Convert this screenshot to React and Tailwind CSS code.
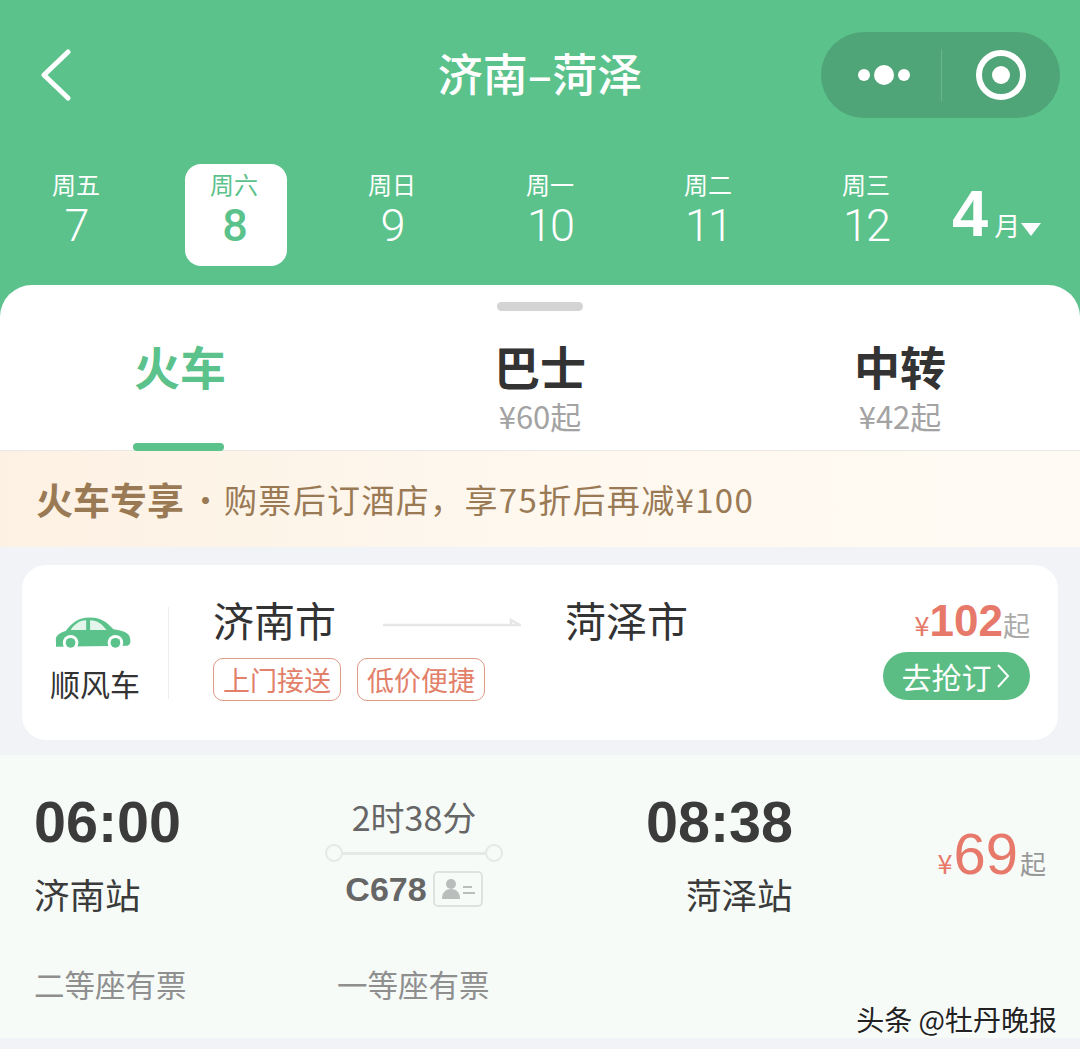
const cjk = '"Noto Sans CJK SC", "Liberation Sans", sans-serif';

const days = [
  { week: '周五', day: '7' },
  { week: '周六', day: '8', active: true },
  { week: '周日', day: '9' },
  { week: '周一', day: '10' },
  { week: '周二', day: '11' },
  { week: '周三', day: '12' },
];

function Header() {
  return (
    <div className="flex h-[317px] flex-col bg-[#5bc28b] text-white">
      <div className="relative mt-[32px] flex h-[86px] items-center justify-between pl-[38px] pr-[20px]">
        <svg width="36" height="52" viewBox="0 0 36 52" fill="none" stroke="white" strokeWidth="5" strokeLinecap="round" strokeLinejoin="round">
          <path d="M30 3 L6 26 L30 49" />
        </svg>
        <div className="absolute left-0 right-0 top-[13px] text-center text-[45px] leading-[56px] font-medium">济南–菏泽</div>
        <div className="flex h-[86px] w-[239px] items-center rounded-full bg-[#4fa578]">
          <div className="flex w-[120px] items-center justify-center gap-[4px] pl-[6px]">
            <span className="h-[12px] w-[12px] rounded-full bg-white" />
            <span className="h-[20px] w-[20px] rounded-full bg-white" />
            <span className="h-[12px] w-[12px] rounded-full bg-white" />
          </div>
          <div className="h-[52px] w-px bg-[#66b68c]" />
          <div className="flex flex-1 items-center justify-center">
            <div className="flex h-[50px] w-[50px] items-center justify-center rounded-full border-[6px] border-white">
              <span className="h-[18px] w-[18px] rounded-full bg-white" />
            </div>
          </div>
        </div>
      </div>
      <div className="mt-[46px] flex pl-[25px]">
        {days.map((d) => (
          <div key={d.day} className="flex w-[158px] justify-start">
            <div className={`flex h-[102px] flex-col items-center rounded-[16px] pt-[6px] ${d.active ? 'ml-[2px] w-[102px] bg-white pr-[4px] text-[#5bc28b]' : 'w-[102px]'}`}>
              <span className="text-[24px] leading-[28px]">{d.week}</span>
              <span className={`mt-[4px] font-['Roboto'] text-[45px] leading-[48px] tracking-[-2px] ${d.active ? 'font-medium' : 'font-light'}`}>{d.day}</span>
            </div>
          </div>
        ))}
        <div className="-ml-[21px] mt-[15px] flex h-[70px] items-baseline">
          <span className="text-[65px] leading-[70px] font-bold font-['Liberation_Sans']">4</span>
          <span className="ml-[6px] text-[26px] leading-none">月</span>
          <svg className="ml-[1px]" width="20" height="13" viewBox="0 0 20 13" fill="white">
            <path d="M0 0 H20 L10 13 Z" />
          </svg>
        </div>
      </div>
    </div>
  );
}

function Tabs() {
  return (
    <div className="relative -mt-[32px] h-[166px] rounded-t-[32px] bg-white">
      <div className="absolute left-[497px] top-[17px] h-[9px] w-[86px] rounded-full bg-[#d4d4d4]" />
      <div className="flex h-[166px] border-b border-[#e8e8e8]">
        <div className="relative flex w-[360px] flex-col items-center pt-[50px]">
          <span className="text-[46px] leading-[60px] font-bold text-[#5bc28b]">火车</span>
          <span className="absolute bottom-[-1px] left-[133px] h-[8px] w-[91px] rounded-full bg-[#5bc28b]" />
        </div>
        <div className="flex w-[360px] flex-col items-center pt-[50px]">
          <span className="text-[46px] leading-[60px] font-bold text-[#333]">巴士</span>
          <span className="mt-[3px] text-[31px] leading-[36px] text-[#a3a3a3]">¥60起</span>
        </div>
        <div className="flex w-[360px] flex-col items-center pt-[50px]">
          <span className="text-[46px] leading-[60px] font-bold text-[#333]">中转</span>
          <span className="mt-[3px] text-[31px] leading-[36px] text-[#a3a3a3]">¥42起</span>
        </div>
      </div>
    </div>
  );
}

function Promo() {
  return (
    <div className="flex h-[96px] items-center bg-gradient-to-r from-[#fdf1e3] via-[#fef8ef] to-[#fffaf3] pl-[36px]">
      <span className="text-[37px] leading-[48px] font-bold text-[#9a7a55]">火车专享</span>
      <span className="ml-[5px] w-[35px] text-[33px] leading-[48px] text-[#9a7a55]">·</span>
      <span className="text-[33px] leading-[48px] tracking-[1.35px] text-[#9a7a55]">购票后订酒店，享75折后再减¥100</span>
    </div>
  );
}

function Tag({ children }) {
  return (
    <span className="flex h-[43px] w-[128px] items-center justify-center rounded-[10px] border border-[#dd9a88] text-[27px] leading-none text-[#e2806a]">
      {children}
    </span>
  );
}

function CarIcon() {
  return (
    <svg width="76" height="36" viewBox="0 0 78 36" fill="#5bc28b">
      <path d="M1 26 C0 20 4 17 11 15 C17 7 23 1 36 1 C47 1 52 5 60 13 C68 14 76 16 77 22 C78 27 77 29 74 30 L1 31 Z" />
      <path fill="#e4f5ec" d="M16 14 C21 7 26 4 32 4 L32 14 Z M36 4 C44 4 48 8 53 14 L36 14 Z" />
      <circle cx="16" cy="27" r="8" fill="#fff" />
      <circle cx="16" cy="27" r="5" />
      <circle cx="62" cy="27" r="8" fill="#fff" />
      <circle cx="62" cy="27" r="5" />
    </svg>
  );
}

function RideCard() {
  return (
    <div className="bg-[#f1f3f7] px-[22px] pt-[18px] pb-[15px]">
      <div className="flex h-[175px] items-center rounded-[24px] bg-white">
        <div className="flex w-[146px] flex-col items-center pr-[4px] pt-[14px]">
          <CarIcon />
          <span className="ml-[4px] mt-[11px] text-[30px] leading-[40px] text-[#333]">顺风车</span>
        </div>
        <div className="h-[92px] w-px bg-[#eee]" />
        <div className="ml-[44px] flex w-[500px] flex-col pb-[14px]">
          <div className="flex items-center">
            <span className="text-[41px] leading-[56px] text-[#333]">济南市</span>
            <svg className="ml-[47px] mt-[8px]" width="138" height="12" viewBox="0 0 138 12" fill="none">
              <path d="M0 8 H137 L128 3 V8" stroke="#e6e6e6" strokeWidth="2.5" />
            </svg>
            <span className="ml-[44px] text-[41px] leading-[56px] text-[#333]">菏泽市</span>
          </div>
          <div className="mt-[11px] flex gap-[16px]">
            <Tag>上门接送</Tag>
            <Tag>低价便捷</Tag>
          </div>
        </div>
        <div className="ml-auto mr-[28px] flex flex-col items-end pb-[12px]">
          <div className="flex items-baseline text-[#e6796a]">
            <span className="text-[27px]">¥</span>
            <span className="text-[44px] leading-[56px] font-bold font-['Liberation_Sans']">102</span>
            <span className="text-[27px] text-[#aaa]">起</span>
          </div>
          <div className="mt-[3px] flex h-[48px] w-[147px] items-center justify-center gap-[4px] rounded-full bg-[#5bbd84] pr-[2px] text-[30px] leading-none text-white">
            去抢订
            <svg width="14" height="26" viewBox="0 0 14 26" fill="none" stroke="white" strokeWidth="2">
              <path d="M2 2 L12 13 L2 24" />
            </svg>
          </div>
        </div>
      </div>
    </div>
  );
}

function TrainRow() {
  return (
    <div className="relative h-[283px] bg-[#f6fbf8] pt-[34px]">
      <div className="flex">
        <div className="flex w-[280px] flex-col pl-[34px]">
          <span className="text-[57.5px] leading-[66px] font-bold text-[#3b3b3b] font-['Liberation_Sans']">06:00</span>
          <span className="mt-[16px] text-[35.5px] leading-[46px] text-[#3b3b3b]">济南站</span>
        </div>
        <div className="flex w-[268px] flex-col items-center pt-[6px]">
          <span className="text-[34px] leading-[44px] text-[#666]">2时38分</span>
          <div className="mt-[5px] flex w-[178px] items-center">
            <span className="h-[18px] w-[18px] rounded-full border-2 border-[#e4e8e6]" />
            <span className="h-[3px] flex-1 bg-[#e4e8e6]" />
            <span className="h-[18px] w-[18px] rounded-full border-2 border-[#e4e8e6]" />
          </div>
          <div className="mt-[5px] flex items-center gap-[6px]">
            <span className="text-[34px] leading-[44px] font-bold text-[#666] font-['Liberation_Sans']">C678</span>
            <span className="flex h-[36px] w-[50px] items-center justify-center gap-[4px] rounded-[5px] border-2 border-[#dfe2e0]">
              <svg width="34" height="22" viewBox="0 0 34 22" fill="#b9bdbb">
                <circle cx="10" cy="6" r="5" />
                <path d="M1 21 C1 14 5 11 10 11 C15 11 19 14 19 21 Z" />
                <rect x="22" y="8" width="9" height="2" />
                <rect x="22" y="14" width="12" height="2" />
              </svg>
            </span>
          </div>
        </div>
        <div className="flex w-[290px] flex-col items-start pl-[98px]">
          <span className="text-[57.5px] leading-[66px] font-bold text-[#3b3b3b] font-['Liberation_Sans']">08:38</span>
          <span className="mt-[16px] ml-[40px] whitespace-nowrap text-[35.5px] leading-[46px] text-[#3b3b3b]">菏泽站</span>
        </div>
        <div className="ml-auto mr-[34px] mt-[35px] flex items-baseline self-start text-[#e6796a]">
          <span className="mr-[1px] text-[27px]">¥</span>
          <span className="text-[58px] leading-[60px] font-['Liberation_Sans']">69</span>
          <span className="ml-[2px] text-[26px] text-[#999]">起</span>
        </div>
      </div>
      <div className="mt-[45px] flex pl-[34px] text-[30.5px] leading-[44px] text-[#8f8f8f]">
        <span className="w-[303px]">二等座有票</span>
        <span>一等座有票</span>
      </div>
      <div className="absolute right-[23px] top-[246px] text-[28px] leading-[36px] text-[#222] [text-shadow:1px_1px_0_#fff]">头条 @牡丹晚报</div>
    </div>
  );
}

export default function App() {
  return (
    <div className="h-[1059px] w-[1080px] overflow-hidden bg-white" style={{ fontFamily: cjk }}>
      <Header />
      <Tabs />
      <Promo />
      <RideCard />
      <TrainRow />
      <div className="h-[11px] bg-[#f1f3f7]" />
    </div>
  );
}
